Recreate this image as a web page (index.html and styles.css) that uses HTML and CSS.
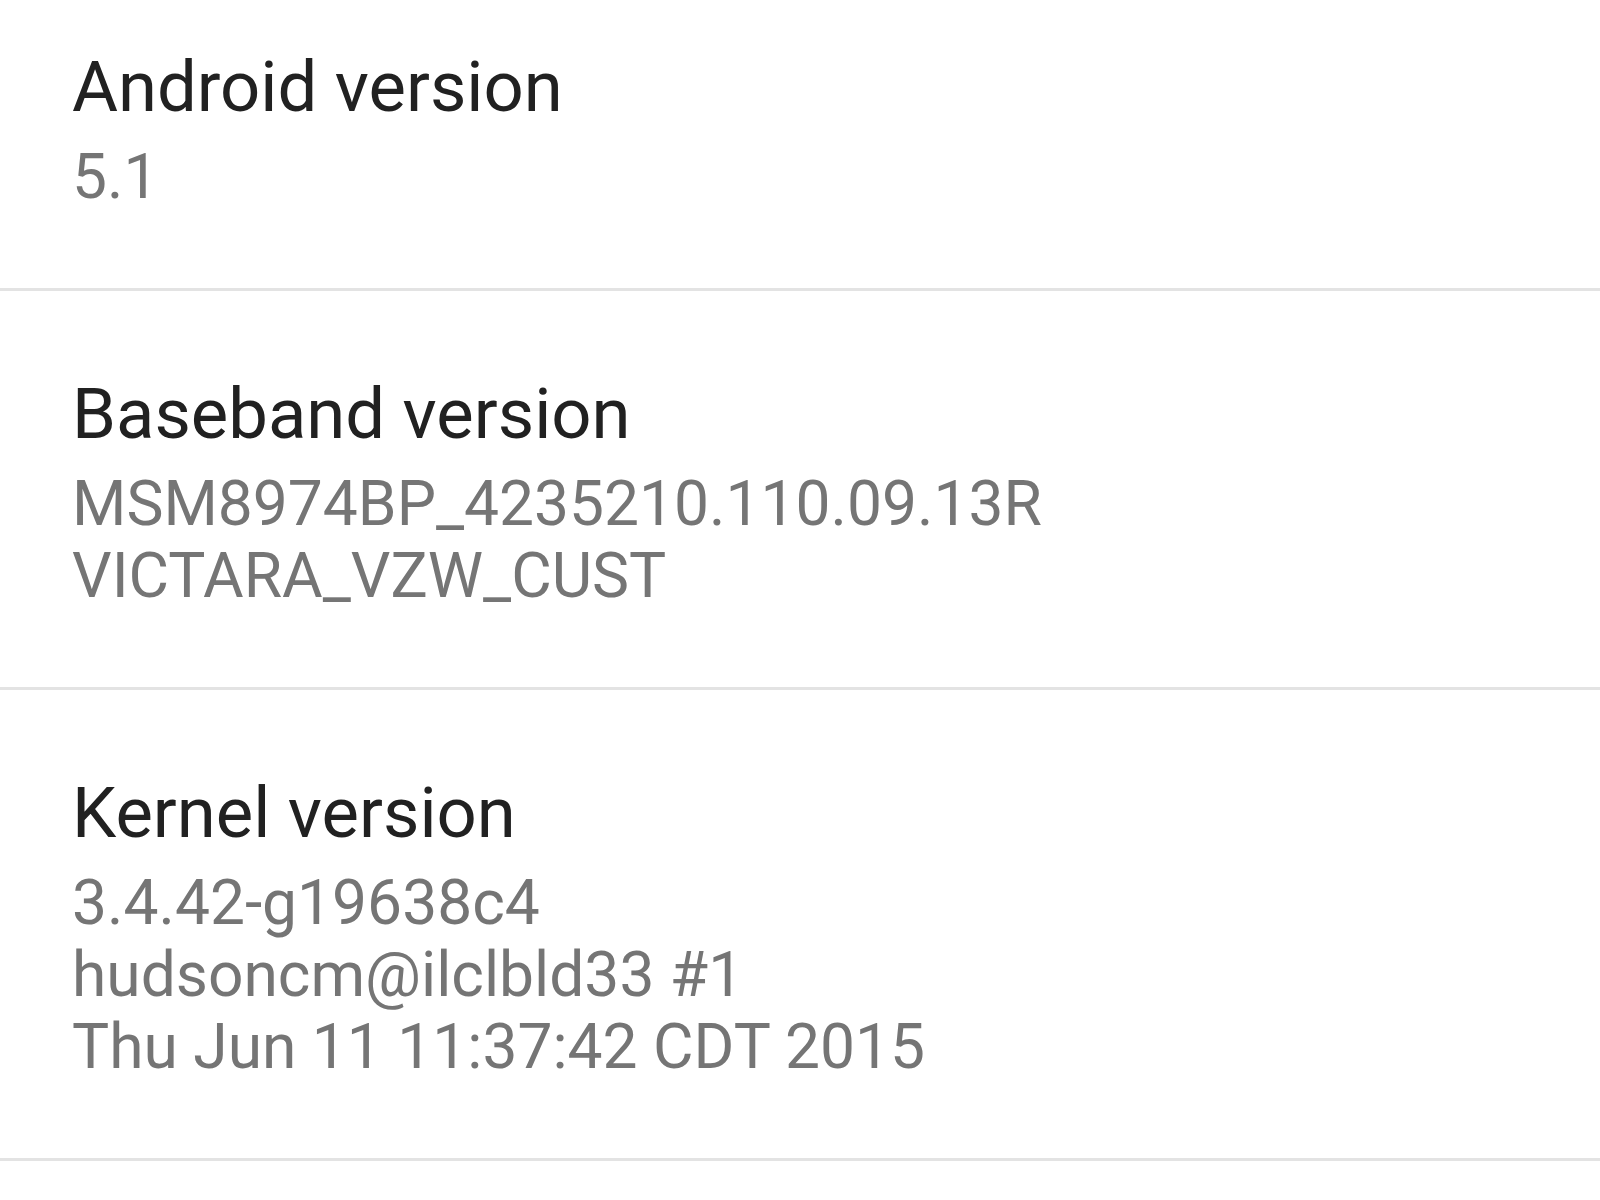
FILE: index.html
```html
<!DOCTYPE html>
<html lang="en">
<head>
<meta charset="utf-8">
<title>About phone</title>
<link rel="stylesheet" href="styles.css">
</head>
<body>
<div class="list">
  <div class="item">
    <div class="title">Android version</div>
    <div class="summary">5.1</div>
  </div>
  <div class="item">
    <div class="title">Baseband version</div>
    <div class="summary">MSM8974BP_4235210.110.09.13R<br>VICTARA_VZW_CUST</div>
  </div>
  <div class="item">
    <div class="title">Kernel version</div>
    <div class="summary">3.4.42-g19638c4<br>hudsoncm@ilclbld33 #1<br>Thu Jun 11 11:37:42 CDT 2015</div>
  </div>
</div>
</body>
</html>
```

FILE: styles.css
```css
html, body {
  margin: 0;
  padding: 0;
  background: #ffffff;
}

body {
  width: 1600px;
  height: 1200px;
  overflow: hidden;
  font-family: Roboto, "Noto Sans", sans-serif;
}

.list {
  display: flex;
  flex-direction: column;
}

.item {
  padding: 79px 0 75px 72px;
  border-bottom: 3px solid #e3e3e3;
}

.item:first-child {
  padding-top: 43px;
}

.title {
  font-size: 70.6px;
  line-height: 88px;
  color: #212121;
  white-space: nowrap;
}

.summary {
  margin-top: 10px;
  font-size: 62.3px;
  line-height: 72px;
  color: #757575;
  white-space: nowrap;
}
```
